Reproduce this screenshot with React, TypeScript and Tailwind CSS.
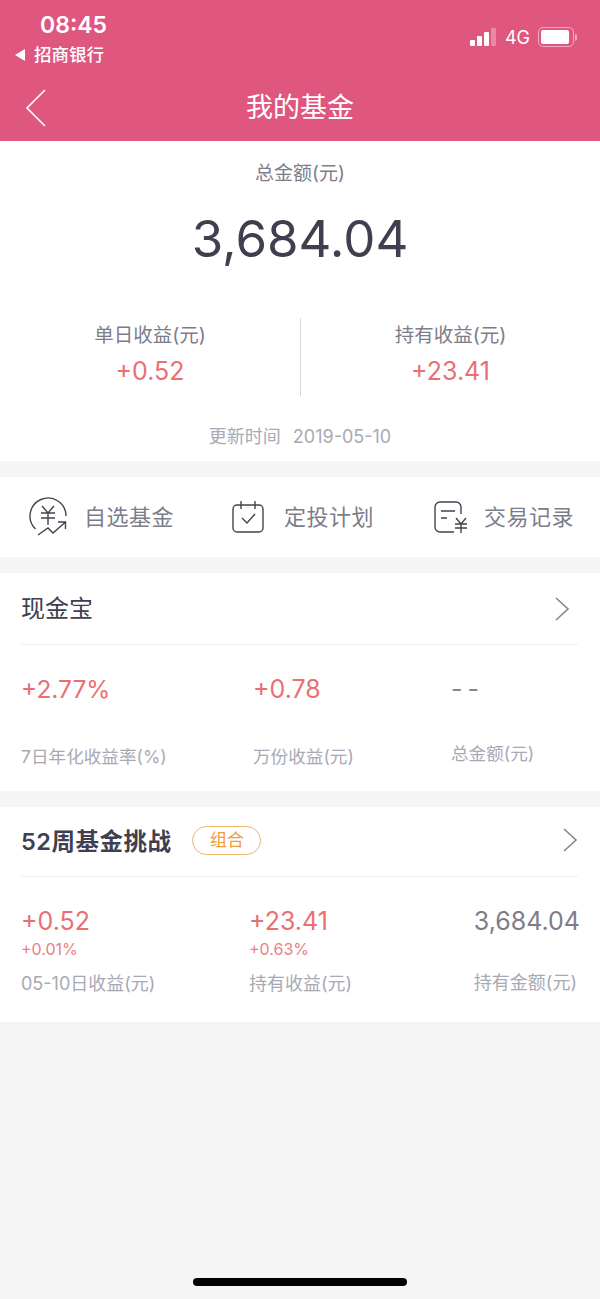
import React from "react";

const FONT = "font-['Inter','Noto_Sans_CJK_SC',sans-serif]";

const Chevron = ({ className }: { className: string }) => (
  <svg className={className} viewBox="0 0 16 24" fill="none" stroke="#85858f" strokeWidth="1.6">
    <path d="M2 1 L14 12 L2 23" />
  </svg>
);

const YuanIcon = () => (
  <svg width="38" height="40" viewBox="0 0 38 40" fill="none" stroke="#43434f" strokeWidth="1.4">
    <path d="M6.5 32 A18 18 0 1 1 37 19" />
    <path d="M13 9 L19 16 L25 9 M12 16 H26 M12 21 H26 M19 16 V28" />
    <path d="M9 38 L19 31 L24 36 L36.5 25 M29 25 H36.5 V32" />
  </svg>
);

const CalendarIcon = () => (
  <svg width="32" height="32" viewBox="0 0 32 32" fill="none" stroke="#43434f" strokeWidth="1.4">
    <rect x="1" y="4" width="30" height="27" rx="4" />
    <path d="M9 0 V8 M23 0 V8" />
    <path d="M10 17 L15 22 L23 13" />
  </svg>
);

const RecordIcon = () => (
  <svg width="34" height="32" viewBox="0 0 34 32" fill="none" stroke="#43434f" strokeWidth="1.4">
    <path d="M20 31 H6 A5 5 0 0 1 1 26 V6 A5 5 0 0 1 6 1 H22 A5 5 0 0 1 27 6 V13" />
    <path d="M7 10 H21 M7 17 H13" />
    <path d="M22 17 L27 23 L32 17 M21 23 H33 M21 27 H33 M27 23 V32" />
  </svg>
);

const Shortcut = ({ icon, label, className }: { icon: React.ReactNode; label: string; className: string }) => (
  <div className={`flex w-[200px] items-center ${className}`}>
    {icon}
    <span className="text-[22px] leading-8 tracking-[0.5px] text-[#7d7d8a]">{label}</span>
  </div>
);

const Stat = ({ value, sub }: { value: string; sub: string }) => (
  <div>
    <div className="text-[25px] leading-[30px] text-[#ea6f73]">{value}</div>
    <div className="mt-[3px] text-[16px] leading-5 text-[#ea7f84]">{sub}</div>
  </div>
);

export default function App() {
  return (
    <div className={`${FONT} flex min-h-[1299px] w-[600px] flex-col bg-[#f5f5f5]`}>
      <header className="relative h-[141px] bg-[#df567f] text-white">
        <div className="flex justify-between">
          <div className="pl-[15px] pt-[11px]">
            <div className="pl-[25px] text-[23px] font-semibold leading-7">08:45</div>
            <div className="mt-[4px] flex items-center text-[17.5px] font-medium leading-[24px]">
              <span className="mr-[9px] h-0 w-0 border-y-[6px] border-r-[10px] border-y-transparent border-r-white" />
              招商银行
            </div>
          </div>
          <div className="flex h-[55px] items-center pr-[23px] pt-[19px]">
            <div className="mr-[9px] flex items-end gap-[2px]">
              <span className="h-[6px] w-[5px] rounded-[1px] bg-white" />
              <span className="h-[10px] w-[5px] rounded-[1px] bg-white" />
              <span className="h-[14px] w-[5px] rounded-[1px] bg-white" />
              <span className="h-[18px] w-[5px] rounded-[1px] bg-white/30" />
            </div>
            <span className="mr-[8px] text-[18px]">4G</span>
            <div className="flex h-[20px] w-[36px] items-center rounded-[5px] border border-white/50 p-[2px]">
              <div className="h-full w-[28px] rounded-[2px] bg-white" />
            </div>
            <span className="ml-[1px] h-[7px] w-[2px] rounded-r-full bg-white/50" />
          </div>
        </div>
        <div className="relative mt-[21px] text-center text-[27px] leading-[40px]">
          <svg className="absolute left-[25px] top-[1px] h-[38px] w-[21px]" viewBox="0 0 21 38" fill="none" stroke="white" strokeWidth="1.6">
            <path d="M20 1 L2 19 L20 37" />
          </svg>
          我的基金
        </div>
      </header>

      <section className="flex h-[320px] flex-col items-center bg-white">
        <div className="mt-[21px] text-[19px] leading-6 text-[#7d7d8a]">总金额(元)</div>
        <div className="mt-[23px] text-[51px] leading-[60px] text-[#3f3f4f]">3,684.04</div>
        <div className="mt-[49px] flex w-full">
          <div className="flex h-[78px] w-[301px] flex-col items-center border-r border-[#d9d9dd]">
            <div className="mt-[5px] text-[19.5px] leading-6 text-[#7d7d8a]">单日收益(元)</div>
            <div className="mt-[9px] text-[25px] leading-[30px] text-[#ea6f73]">+0.52</div>
          </div>
          <div className="flex h-[78px] flex-1 flex-col items-center">
            <div className="mt-[5px] text-[19.5px] leading-6 text-[#7d7d8a]">持有收益(元)</div>
            <div className="mt-[9px] text-[25px] leading-[30px] text-[#ea6f73]">+23.41</div>
          </div>
        </div>
        <div className="mt-[29px] flex gap-3 text-[18px] leading-6 text-[#a9a9b5]">
          <span>更新时间</span>
          <span>2019-05-10</span>
        </div>
      </section>

      <section className="mt-[16px] flex h-[80px] items-center bg-white">
        <Shortcut className="pl-[29px]" icon={<span className="mr-[17px] flex"><YuanIcon /></span>} label="自选基金" />
        <Shortcut className="pl-[32px]" icon={<span className="mr-[20px] flex"><CalendarIcon /></span>} label="定投计划" />
        <Shortcut className="pl-[34px]" icon={<span className="mr-[16px] flex"><RecordIcon /></span>} label="交易记录" />
      </section>

      <section className="mt-[16px] h-[218px] bg-white pl-[21px] pr-[22px]">
        <div className="flex h-[72px] items-center border-b border-[#f0f0f2]">
          <span className="text-[24px] text-[#3f3f4f]">现金宝</span>
          <Chevron className="ml-auto mr-[8px] h-[24px] w-[16px]" />
        </div>
        <div className="flex pt-[29px]">
          <div className="w-[232px]">
            <div className="text-[24.5px] leading-[30px] text-[#ea6f73]">+2.77%</div>
            <div className="mt-[41px] text-[17.6px] leading-6 text-[#a9a9b5]">7日年化收益率(%)</div>
          </div>
          <div className="w-[198px]">
            <div className="text-[25px] leading-[30px] text-[#ea6f73]">+0.78</div>
            <div className="mt-[41px] text-[17.6px] leading-6 text-[#a9a9b5]">万份收益(元)</div>
          </div>
          <div>
            <div className="text-[25px] leading-[30px] tracking-[-1px] text-[#85858f]">- -</div>
            <div className="mt-[38px] text-[17.6px] leading-6 text-[#a9a9b5]">总金额(元)</div>
          </div>
        </div>
      </section>

      <section className="mt-[16px] h-[215px] bg-white pl-[21px] pr-[22px]">
        <div className="flex h-[70px] items-center border-b border-[#f0f0f2]">
          <span className="text-[23.5px] font-semibold tracking-[0.5px] text-[#3f3f4f]">52周基金挑战</span>
          <span className="mb-[2px] ml-[21px] flex h-[29px] w-[69px] items-center justify-center rounded-full border border-[#eeb46e] text-[17px] text-[#ef9a35]">组合</span>
          <Chevron className="mb-[4px] ml-auto h-[24px] w-[16px]" />
        </div>
        <div className="flex pt-[29px]">
          <div className="w-[228px]">
            <Stat value="+0.52" sub="+0.01%" />
            <div className="mt-[13px] text-[18px] leading-6 text-[#a9a9b5]">05-10日收益(元)</div>
          </div>
          <div className="w-[224px]">
            <Stat value="+23.41" sub="+0.63%" />
            <div className="mt-[13px] text-[18px] leading-6 text-[#a9a9b5]">持有收益(元)</div>
          </div>
          <div className="-mr-[2px] flex-1 text-right">
            <div className="text-[25px] leading-[30px] text-[#7d7d8a]">3,684.04</div>
            <div className="mr-[3px] mt-[35px] whitespace-nowrap text-[18px] leading-6 text-[#a9a9b5]">持有金额(元)</div>
          </div>
        </div>
      </section>

      <div className="mt-auto flex justify-center pb-[13px]">
        <div className="h-[8px] w-[214px] rounded-full bg-black" />
      </div>
    </div>
  );
}
